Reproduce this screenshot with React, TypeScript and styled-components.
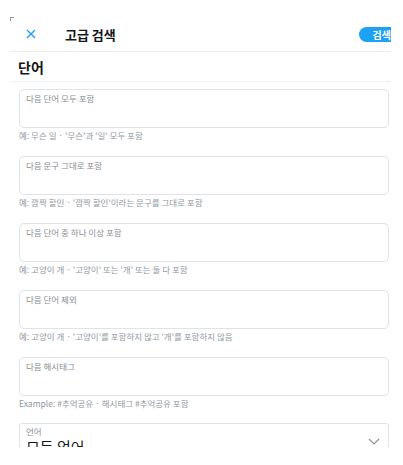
import React from "react";
import styled, { createGlobalStyle } from "styled-components";

const Global = createGlobalStyle`
  html, body { margin: 0; padding: 0; background: #fff; }
  body { font-family: "Noto Sans CJK KR", "Noto Sans", sans-serif; }
`;

const Page = styled.div`
  width: 403px;
  height: 447px;
  overflow: hidden;
  padding: 17px 12px 0 10px;
  box-sizing: border-box;
  position: relative;
`;

const Corner = styled.div`
  position: absolute;
  left: 10px;
  top: 17px;
  width: 3px;
  height: 3px;
  border-top: 1px solid #999;
  border-left: 1px solid #999;
`;

const Header = styled.div`
  height: 34px;
  display: flex;
  align-items: center;
  border-bottom: 1px solid #e6ecf0;
  overflow: hidden;
`;

const CloseBtn = styled.div`
  flex: 0 0 42px;
  width: 42px;
  display: flex;
  justify-content: center;
  align-items: center;
  color: #1da1f2;
`;

const Title = styled.div`
  flex: 1;
  font-size: 13px;
  font-weight: 700;
  color: #14171a;
  padding-left: 13px;
`;

const SearchBtn = styled.div`
  background: #1da1f2;
  color: #fff;
  font-size: 10px;
  font-weight: 700;
  height: 15px;
  line-height: 15px;
  padding: 0 4px 0 14px;
  margin-right: -4px;
  border-radius: 8px 0 0 8px;
`;

const SectionTitle = styled.div`
  height: 29px;
  display: flex;
  align-items: center;
  padding-left: 8px;
  font-size: 14px;
  font-weight: 700;
  color: #14171a;
  border-bottom: 1px solid #eef1f3;
`;

const Fields = styled.div`
  padding: 7px 2px 0 9px;
  display: flex;
  flex-direction: column;
`;

const Group = styled.div`
  display: flex;
  flex-direction: column;
  margin-bottom: 14px;
`;

const InputBox = styled.div`
  height: 39px;
  border: 1px solid #dfe3e6;
  border-radius: 5px;
  box-sizing: border-box;
  padding: 2px 6px;
  font-size: 8.5px;
  color: #888d91;
`;

const Help = styled.div`
  font-size: 8.5px;
  color: #8f98a0;
  margin-top: 1px;
  line-height: 13px;
`;

const Select = styled.div`
  height: 40px;
  border: 1px solid #dfe3e6;
  border-radius: 3px;
  box-sizing: border-box;
  padding: 2px 6px;
  display: flex;
  align-items: center;
  margin-top: -1px;
`;

const SelectText = styled.div`
  flex: 1;
  display: flex;
  flex-direction: column;
  align-self: flex-start;
`;

const SelectLabel = styled.div`
  font-size: 8.5px;
  color: #888d91;
  line-height: 11px;
`;

const SelectValue = styled.div`
  font-size: 15px;
  color: #14171a;
  line-height: 20px;
`;

const Chevron = styled.div`
  color: #8a9299;
  display: flex;
  align-items: center;
  margin-right: 2px;
  margin-bottom: 4px;
`;

const fields = [
  ["다음 단어 모두 포함", "예: 무슨 일 · '무슨'과 '일' 모두 포함"],
  ["다음 문구 그대로 포함", "예: 깜짝 할인 · '깜짝 할인'이라는 문구를 그대로 포함"],
  ["다음 단어 중 하나 이상 포함", "예: 고양이 개 · '고양이' 또는 '개' 또는 둘 다 포함"],
  ["다음 단어 제외", "예: 고양이 개 · '고양이'를 포함하지 않고 '개'를 포함하지 않음"],
  ["다음 해시태그", "Example: #추억공유 · 해시태그 #추억공유 포함"],
];

export default function App() {
  return (
    <>
      <Global />
      <Page>
        <Corner />
        <Header>
          <CloseBtn>
            <svg width="10" height="10" viewBox="0 0 10 10">
              <path d="M1 1L9 9M9 1L1 9" stroke="currentColor" strokeWidth="1.4" />
            </svg>
          </CloseBtn>
          <Title>고급 검색</Title>
          <SearchBtn>검색</SearchBtn>
        </Header>
        <SectionTitle>단어</SectionTitle>
        <Fields>
          {fields.map(([ph, help]) => (
            <Group key={ph}>
              <InputBox>{ph}</InputBox>
              <Help>{help}</Help>
            </Group>
          ))}
          <Select>
            <SelectText>
              <SelectLabel>언어</SelectLabel>
              <SelectValue>모든 언어</SelectValue>
            </SelectText>
            <Chevron>
              <svg width="12" height="7" viewBox="0 0 12 7">
                <path d="M1 1L6 6L11 1" stroke="currentColor" strokeWidth="1.2" fill="none" />
              </svg>
            </Chevron>
          </Select>
        </Fields>
      </Page>
    </>
  );
}
